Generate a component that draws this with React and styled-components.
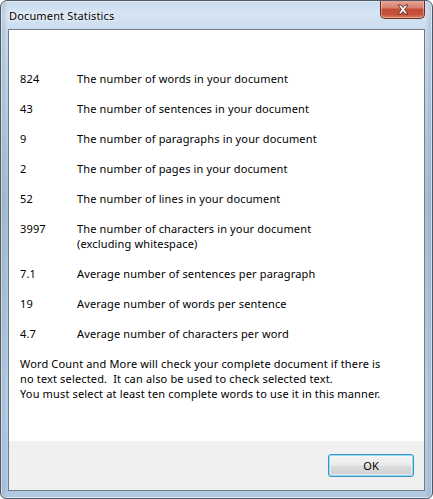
import React from "react";
import styled, { createGlobalStyle } from "styled-components";

const GlobalStyle = createGlobalStyle`
  html, body {
    margin: 0;
    padding: 0;
    background: #ffffff;
  }
  body {
    font-family: "Noto Sans", "DejaVu Sans", sans-serif;
  }
`;

const stats = [
  { value: "824", label: ["The number of words in your document"] },
  { value: "43", label: ["The number of sentences in your document"] },
  { value: "9", label: ["The number of paragraphs in your document"] },
  { value: "2", label: ["The number of pages in your document"] },
  { value: "52", label: ["The number of lines in your document"] },
  {
    value: "3997",
    label: ["The number of characters in your document", "(excluding whitespace)"],
  },
  { value: "7.1", label: ["Average number of sentences per paragraph"] },
  { value: "19", label: ["Average number of words per sentence"] },
  { value: "4.7", label: ["Average number of characters per word"] },
];

const Window = styled.div`
  box-sizing: border-box;
  width: 433px;
  height: 499px;
  border: 1px solid #4f5965;
  border-radius: 7px 7px 6px 6px;
  background:
    linear-gradient(
      90deg,
      rgba(120, 145, 170, 0.35) 0px,
      rgba(255, 255, 255, 0) 7px,
      rgba(255, 255, 255, 0) 424px,
      rgba(120, 145, 170, 0.35) 431px
    ),
    linear-gradient(
      180deg,
      #c6d9ec 0px,
      #d6e5f4 12px,
      #cadcee 28px,
      #a9c0d8 200px,
      #b9d0e8 400px,
      #b2c9e2 499px
    );
  box-shadow: inset 0 0 0 1px rgba(255, 255, 255, 0.55);
  display: flex;
  flex-direction: column;
  overflow: hidden;
`;

const TitleBar = styled.div`
  height: 28px;
  display: flex;
  align-items: flex-start;
  justify-content: space-between;
  padding: 0 7px 0 8px;
`;

const Title = styled.div`
  margin-top: 7px;
  font-size: 11px;
  line-height: 15px;
  letter-spacing: 0.15px;
  color: #000;
  text-shadow: 0 0 6px rgba(255, 255, 255, 0.95), 0 0 2px #fff;
`;

const CloseButton = styled.div`
  box-sizing: border-box;
  width: 45px;
  height: 19px;
  margin-top: -1px;
  border: 1px solid #6b2b23;
  border-top: none;
  border-radius: 0 0 5px 5px;
  background: linear-gradient(
    180deg,
    #e9a99b 0%,
    #d77d6c 45%,
    #c24a37 50%,
    #c7503b 80%,
    #d6805f 100%
  );
  box-shadow: inset 0 0 0 1px rgba(255, 220, 210, 0.45);
  display: flex;
  align-items: center;
  justify-content: center;
`;

const Client = styled.div`
  flex: 1;
  margin: 0 7px 7px;
  border: 1px solid #6f7c8a;
  display: flex;
  flex-direction: column;
  background: #ffffff;
`;

const Content = styled.div`
  flex: 1;
  padding: 41px 11px 0;
  display: flex;
  flex-direction: column;
  gap: 15px;
  font-size: 11px;
  line-height: 15px;
  letter-spacing: 0.15px;
  color: #000;
`;

const StatRow = styled.div`
  display: grid;
  grid-template-columns: 57px 1fr;
`;

const Value = styled.div``;

const Label = styled.div`
  display: flex;
  flex-direction: column;
`;

const Note = styled.div`
  color: #000;
`;

const Footer = styled.div`
  height: 49px;
  background: #f0f0f0;
  display: flex;
  justify-content: flex-end;
  align-items: flex-start;
  padding: 13px 10px 0 0;
  box-sizing: border-box;
`;

const OkButton = styled.button`
  box-sizing: border-box;
  width: 86px;
  height: 23px;
  padding: 0;
  border: 1px solid #3d95c6;
  border-radius: 3px;
  font-family: "Noto Sans", "DejaVu Sans", sans-serif;
  font-size: 11px;
  letter-spacing: 0.15px;
  color: #000;
  background: linear-gradient(
    180deg,
    #f2f2f2 0%,
    #ebebeb 48%,
    #dddddd 52%,
    #cfcfcf 100%
  );
  box-shadow: inset 0 0 0 1px #8fdcf5, inset 0 0 0 2px rgba(255, 255, 255, 0.4);
`;

const CloseGlyph = () => (
  <svg width="12" height="11" viewBox="0 0 12 11">
    <path
      d="M1 1 H4 L6 3.5 L8 1 H11 L7.6 5.5 L11 10 H8 L6 7.5 L4 10 H1 L4.4 5.5 Z"
      fill="#ffffff"
      stroke="#5a2018"
      strokeWidth="0.9"
      strokeLinejoin="round"
    />
  </svg>
);

const App = () => (
  <>
    <GlobalStyle />
    <Window>
      <TitleBar>
        <Title>Document Statistics</Title>
        <CloseButton>
          <CloseGlyph />
        </CloseButton>
      </TitleBar>
      <Client>
        <Content>
          {stats.map((s) => (
            <StatRow key={s.value}>
              <Value>{s.value}</Value>
              <Label>
                {s.label.map((line) => (
                  <span key={line}>{line}</span>
                ))}
              </Label>
            </StatRow>
          ))}
          <Note>
            Word Count and More will check your complete document if there is
            <br />
            no text selected.&nbsp; It can also be used to check selected text.
            <br />
            You must select at least ten complete words to use it in this manner.
          </Note>
        </Content>
        <Footer>
          <OkButton>OK</OkButton>
        </Footer>
      </Client>
    </Window>
  </>
);

export default App;
